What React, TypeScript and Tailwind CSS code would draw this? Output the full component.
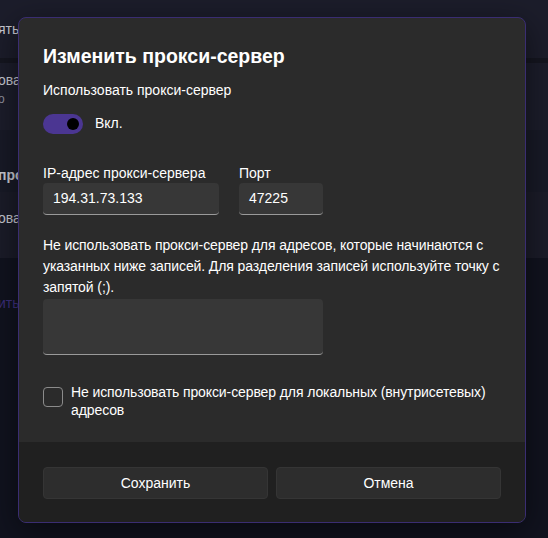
const font = { fontFamily: "'Liberation Sans', Arial, sans-serif" };

export default function App() {
  return (
    <div
      className="relative w-[548px] h-[538px] overflow-hidden bg-[#11131f] text-white"
      style={font}
    >
      {/* Settings page behind the dialog (dimmed) */}
      <div className="flex flex-col">
        <div className="h-[58px] bg-[#1c1d2b] flex items-center text-[14px] text-[#c9cad3] -ml-[2px]">
          ять
        </div>
        <div className="h-[5px] bg-[#151620]" />
        <div className="h-[67px] bg-[#1c1d2b] flex flex-col pt-[8px] -ml-[2px]">
          <span className="text-[14px] leading-[18px] text-[#c9cad3]">ова</span>
          <span className="text-[12px] leading-[20px] text-[#8f909c]">о</span>
        </div>
        <div className="h-[62px] bg-[#181a27] flex items-end pb-[6px] -ml-[2px]">
          <span className="text-[14px] font-semibold text-[#c9cad3]">про</span>
        </div>
        <div className="h-[66px] bg-[#1b1c29] flex items-start pt-[16px] -ml-[2px]">
          <span className="text-[14px] text-[#c9cad3]">ова</span>
        </div>
        <div className="pt-[33px] -ml-[2px]">
          <span className="text-[14px] text-[#3d2f7d]">ить</span>
        </div>
      </div>

      {/* Dialog */}
      <div className="absolute left-[18px] top-[17px] w-[508px] h-[506px] rounded-[8px] border border-[#3a2d72] bg-[#2b2b2b] overflow-hidden flex flex-col shadow-[0_8px_32px_rgba(0,0,0,0.5)]">
        <div className="flex-1 px-[24px] pt-[24px] whitespace-nowrap">
          <h1 className="text-[19.5px] leading-[28px] font-semibold">Изменить прокси-сервер</h1>

          <p className="mt-[10px] text-[14px] leading-[20px]">Использовать прокси-сервер</p>

          <div className="mt-[13px] flex items-center gap-[12px]">
            <div className="w-[40px] h-[20px] rounded-full bg-[#4b3692] flex items-center justify-end pr-[4px]">
              <div className="w-[12px] h-[12px] rounded-full bg-black" />
            </div>
            <span className="text-[14px]">Вкл.</span>
          </div>

          <div className="mt-[30px] flex gap-[20px]">
            <div className="flex flex-col">
              <label className="text-[14px] leading-[19px]">IP-адрес прокси-сервера</label>
              <div className="w-[176px] h-[32px] rounded-[4px] bg-[#373737] border-b border-[#9a9a9a] flex items-center px-[10px] text-[14px]">
                194.31.73.133
              </div>
            </div>
            <div className="flex flex-col">
              <label className="text-[14px] leading-[19px]">Порт</label>
              <div className="w-[84px] h-[32px] rounded-[4px] bg-[#373737] border-b border-[#9a9a9a] flex items-center px-[10px] text-[14px]">
                47225
              </div>
            </div>
          </div>

          <p className="mt-[20px] text-[14px] leading-[21px] tracking-[-0.1px]">
            Не использовать прокси-сервер для адресов, которые начинаются с
            <br />
            указанных ниже записей. Для разделения записей используйте точку с
            <br />
            запятой (;).
          </p>

          <div className="mt-[1px] w-[280px] h-[56px] rounded-[4px] bg-[#373737] border-b border-[#9a9a9a]" />

          <div className="mt-[28px] flex items-start gap-[8px]">
            <div className="mt-[4px] w-[20px] h-[20px] shrink-0 rounded-[4px] border border-[#8b8b8b] bg-[#2b2b2b]" />
            <p className="text-[14px] leading-[18px] tracking-[-0.1px]">
              Не использовать прокси-сервер для локальных (внутрисетевых)
              <br />
              адресов
            </p>
          </div>
        </div>

        <div className="h-[80px] shrink-0 bg-[#202020] px-[24px] pt-[25px] flex items-start gap-[8px]">
          <button className="flex-1 h-[32px] rounded-[4px] bg-[#2d2d2d] border border-[#353535] text-[14px]">
            Сохранить
          </button>
          <button className="flex-1 h-[32px] rounded-[4px] bg-[#2d2d2d] border border-[#353535] text-[14px]">
            Отмена
          </button>
        </div>
      </div>
    </div>
  );
}
